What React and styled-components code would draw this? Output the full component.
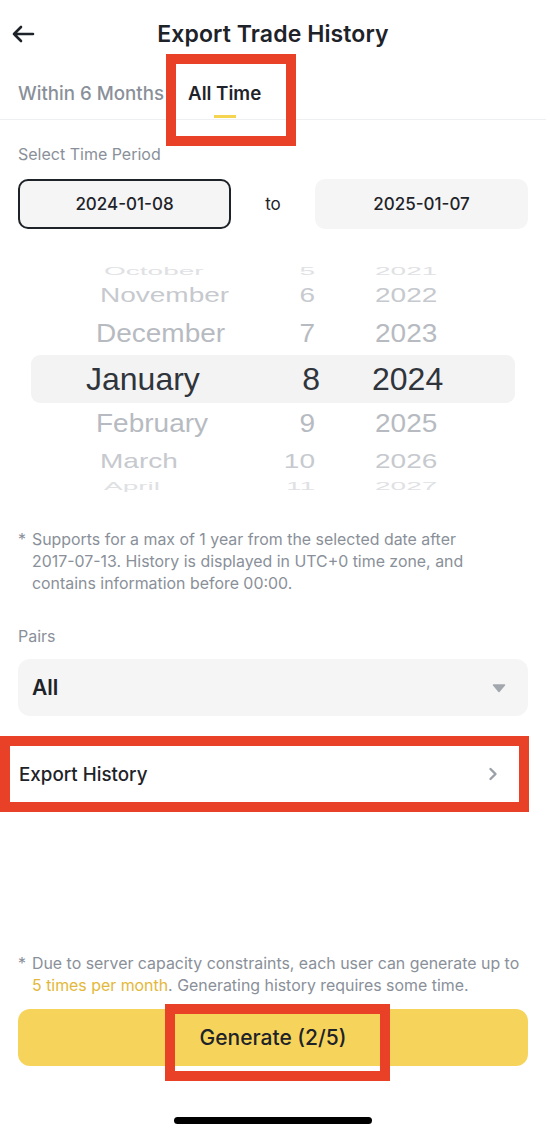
import React from "react";
import styled, { createGlobalStyle } from "styled-components";

const GlobalStyle = createGlobalStyle`
  html, body { margin: 0; padding: 0; background: #ffffff; }
  body { font-family: Inter, "Noto Sans", "Liberation Sans", sans-serif; color: #1e2329; }
  * { box-sizing: border-box; }
`;

const Page = styled.div`
  width: 546px;
  height: 1126px;
  display: flex;
  flex-direction: column;
  background: #fff;
  overflow: hidden;
`;

const Header = styled.header`
  height: 68px;
  display: flex;
  align-items: center;
  justify-content: center;
  position: relative;
`;

const BackButton = styled.button`
  position: absolute;
  left: 10px;
  top: 22px;
  width: 26px;
  height: 24px;
  border: none;
  background: none;
  padding: 0;
  display: flex;
  align-items: center;
  justify-content: center;
`;

const Title = styled.h1`
  margin: 0;
  font-size: 23px;
  font-weight: 600;
  color: #1e2329;
  letter-spacing: 0.1px;
`;

const TabBar = styled.nav`
  height: 52px;
  display: flex;
  gap: 24px;
  padding: 0 18px;
  border-bottom: 1px solid #eeeff1;
`;

const Tab = styled.div`
  position: relative;
  display: flex;
  flex-direction: column;
  align-items: center;
  padding-top: 14px;
  font-size: 18.7px;
  font-weight: ${(p) => (p.$active ? 600 : 500)};
  color: ${(p) => (p.$active ? "#1e2329" : "#8a9099")};
`;

const Underline = styled.span`
  margin-top: 10px;
  width: 22px;
  height: 3px;
  background: #f5d452;
`;

const Highlight = styled.div`
  position: absolute;
  top: ${(p) => p.$t}px;
  left: ${(p) => p.$l}px;
  right: ${(p) => p.$r}px;
  bottom: ${(p) => p.$b}px;
  border: 10px solid #e94128;
  pointer-events: none;
`;

const Body = styled.main`
  flex: 1;
  display: flex;
  flex-direction: column;
  padding: 0 18px;
`;

const Label = styled.div`
  font-size: 16px;
  color: #8a9099;
  margin-top: ${(p) => p.$mt}px;
  line-height: 20px;
`;

const DateRow = styled.div`
  display: flex;
  align-items: center;
  margin-top: 15px;
`;

const DateBox = styled.div`
  width: 213px;
  height: 50px;
  border-radius: 10px;
  background: #f5f5f5;
  border: 2px solid ${(p) => (p.$active ? "#1e2329" : "transparent")};
  display: flex;
  align-items: center;
  justify-content: center;
  font-size: 17px;
  color: #1e2329;
  font-weight: 500;
`;

const ToText = styled.div`
  flex: 1;
  text-align: center;
  font-size: 17px;
  color: #1e2329;
`;

const Wheel = styled.div`
  margin: 34px 13px 0;
  display: flex;
  flex-direction: column;
  font-family: "Liberation Sans", Arial, sans-serif;
`;

const WheelRow = styled.div`
  height: ${(p) => p.$h}px;
  display: flex;
  align-items: center;
  border-radius: 9px;
  background: ${(p) => (p.$selected ? "#f3f3f3" : "transparent")};
  color: ${(p) => p.$color};
  font-size: ${(p) => (p.$selected ? 32 : 28)}px;
`;

const RowInner = styled.div`
  display: flex;
  align-items: center;
  width: 100%;
  transform: scaleY(${(p) => p.$sy});
  line-height: 1;
`;

const MonthCell = styled.span`
  width: 200px;
  padding-left: ${(p) => p.$indent}px;
  white-space: nowrap;
`;

const DayCell = styled.span`
  width: ${(p) => p.$w}px;
  text-align: right;
`;

const YearCell = styled.span`
  padding-left: ${(p) => p.$gap}px;
`;

const Note = styled.p`
  margin: ${(p) => p.$mt}px 0 0;
  display: flex;
  gap: 6px;
  font-size: 15.9px;
  line-height: 22px;
  color: #8a9099;
`;

const Star = styled.span`
  width: 8px;
  flex: none;
`;

const NoWrap = styled.span`
  white-space: nowrap;
`;

const Accent = styled.span`
  color: #e3b83a;
`;

const Select = styled.div`
  margin-top: 13px;
  height: 57px;
  border-radius: 12px;
  background: #f5f5f5;
  display: flex;
  align-items: center;
  justify-content: space-between;
  padding: 0 22px 0 14px;
  font-size: 21px;
  font-weight: 600;
  color: #1e2329;
`;

const RowLink = styled.div`
  position: relative;
  margin-top: 20px;
  height: 76px;
  display: flex;
  align-items: center;
  justify-content: space-between;
  padding: 0 30px 0 1px;
  font-size: 18.8px;
  font-weight: 500;
  color: #1e2329;
`;

const Spacer = styled.div`
  flex: 1;
`;

const Footer = styled.footer`
  display: flex;
  flex-direction: column;
  padding: 0 18px;
`;

const GenerateButton = styled.button`
  position: relative;
  margin-top: 12px;
  height: 57px;
  border: none;
  border-radius: 12px;
  background: #f6d45b;
  font-family: inherit;
  font-size: 21px;
  font-weight: 500;
  color: #1e2329;
`;

const HomeBar = styled.div`
  align-self: center;
  margin: 51px 0 2px;
  width: 198px;
  height: 7px;
  border-radius: 4px;
  background: #000;
`;

const rows = [
  { m: "October", d: "5", y: "2021", h: 16, sy: 0.4, indent: 73, color: "#dfe1e4" },
  { m: "November", d: "6", y: "2022", h: 34, sy: 0.72, indent: 69, color: "#c6c9ce" },
  { m: "December", d: "7", y: "2023", h: 42, sy: 0.93, indent: 65, color: "#b7bbc1" },
  { m: "January", d: "8", y: "2024", h: 48, sy: 1, indent: 55, color: "#30343b", selected: true },
  { m: "February", d: "9", y: "2025", h: 42, sy: 0.93, indent: 65, color: "#b7bbc1" },
  { m: "March", d: "10", y: "2026", h: 32, sy: 0.75, indent: 69, color: "#c6c9ce" },
  { m: "April", d: "11", y: "2027", h: 18, sy: 0.4, indent: 73, color: "#dfe1e4" },
];

const ArrowLeft = () => (
  <svg width="24" height="18" viewBox="0 0 24 18" fill="none">
    <path d="M22 9H3M10 2L3 9l7 7" stroke="#1e2329" strokeWidth="2.6" strokeLinecap="round" strokeLinejoin="round" />
  </svg>
);

const Caret = () => (
  <svg width="14" height="10" viewBox="0 0 14 10">
    <path d="M1.5 2h11L7 8.5z" fill="#a3a7ae" stroke="#a3a7ae" strokeWidth="1.5" strokeLinejoin="round" />
  </svg>
);

const Chevron = () => (
  <svg width="10" height="14" viewBox="0 0 10 14" fill="none">
    <path d="M2.5 2l5 5-5 5" stroke="#9aa0a8" strokeWidth="2.4" strokeLinecap="round" strokeLinejoin="round" />
  </svg>
);

export default function App() {
  return (
    <>
      <GlobalStyle />
      <Page>
        <Header>
          <BackButton aria-label="Back">
            <ArrowLeft />
          </BackButton>
          <Title>Export Trade History</Title>
        </Header>
        <TabBar>
          <Tab>Within 6 Months</Tab>
          <Tab $active>
            All Time
            <Underline />
            <Highlight $t={-14} $l={-22} $r={-35} $b={-27} />
          </Tab>
        </TabBar>
        <Body>
          <Label $mt={24}>Select Time Period</Label>
          <DateRow>
            <DateBox $active>2024-01-08</DateBox>
            <ToText>to</ToText>
            <DateBox>2025-01-07</DateBox>
          </DateRow>
          <Wheel>
            {rows.map((r) => (
              <WheelRow key={r.m} $h={r.h} $selected={r.selected} $color={r.color}>
                <RowInner $sy={r.sy}>
                  <MonthCell $indent={r.indent}>{r.m}</MonthCell>
                  <DayCell $w={r.selected ? 89 : 84}>{r.d}</DayCell>
                  <YearCell $gap={r.selected ? 52 : 60}>{r.y}</YearCell>
                </RowInner>
              </WheelRow>
            ))}
          </Wheel>
          <Note $mt={34}>
            <Star>*</Star>
            <span>
              Supports for a max of 1 year from the selected date after <NoWrap>2017-07-13.</NoWrap> History is displayed in UTC+0 time zone, and contains information before 00:00.
            </span>
          </Note>
          <Label $mt={31}>Pairs</Label>
          <Select>
            <span>All</span>
            <Caret />
          </Select>
          <RowLink>
            <span>Export History</span>
            <Chevron />
            <Highlight $t={0} $l={-18} $r={-1} $b={0} />
          </RowLink>
          <Spacer />
        </Body>
        <Footer>
          <Note $mt={0}>
            <Star>*</Star>
            <span>
              Due to server capacity constraints, each user can generate up to <Accent>5 times per month</Accent>. Generating history requires some time.
            </span>
          </Note>
          <GenerateButton>
            Generate (2/5)
            <Highlight $t={-5} $l={147} $r={138} $b={-15} />
          </GenerateButton>
          <HomeBar />
        </Footer>
      </Page>
    </>
  );
}
